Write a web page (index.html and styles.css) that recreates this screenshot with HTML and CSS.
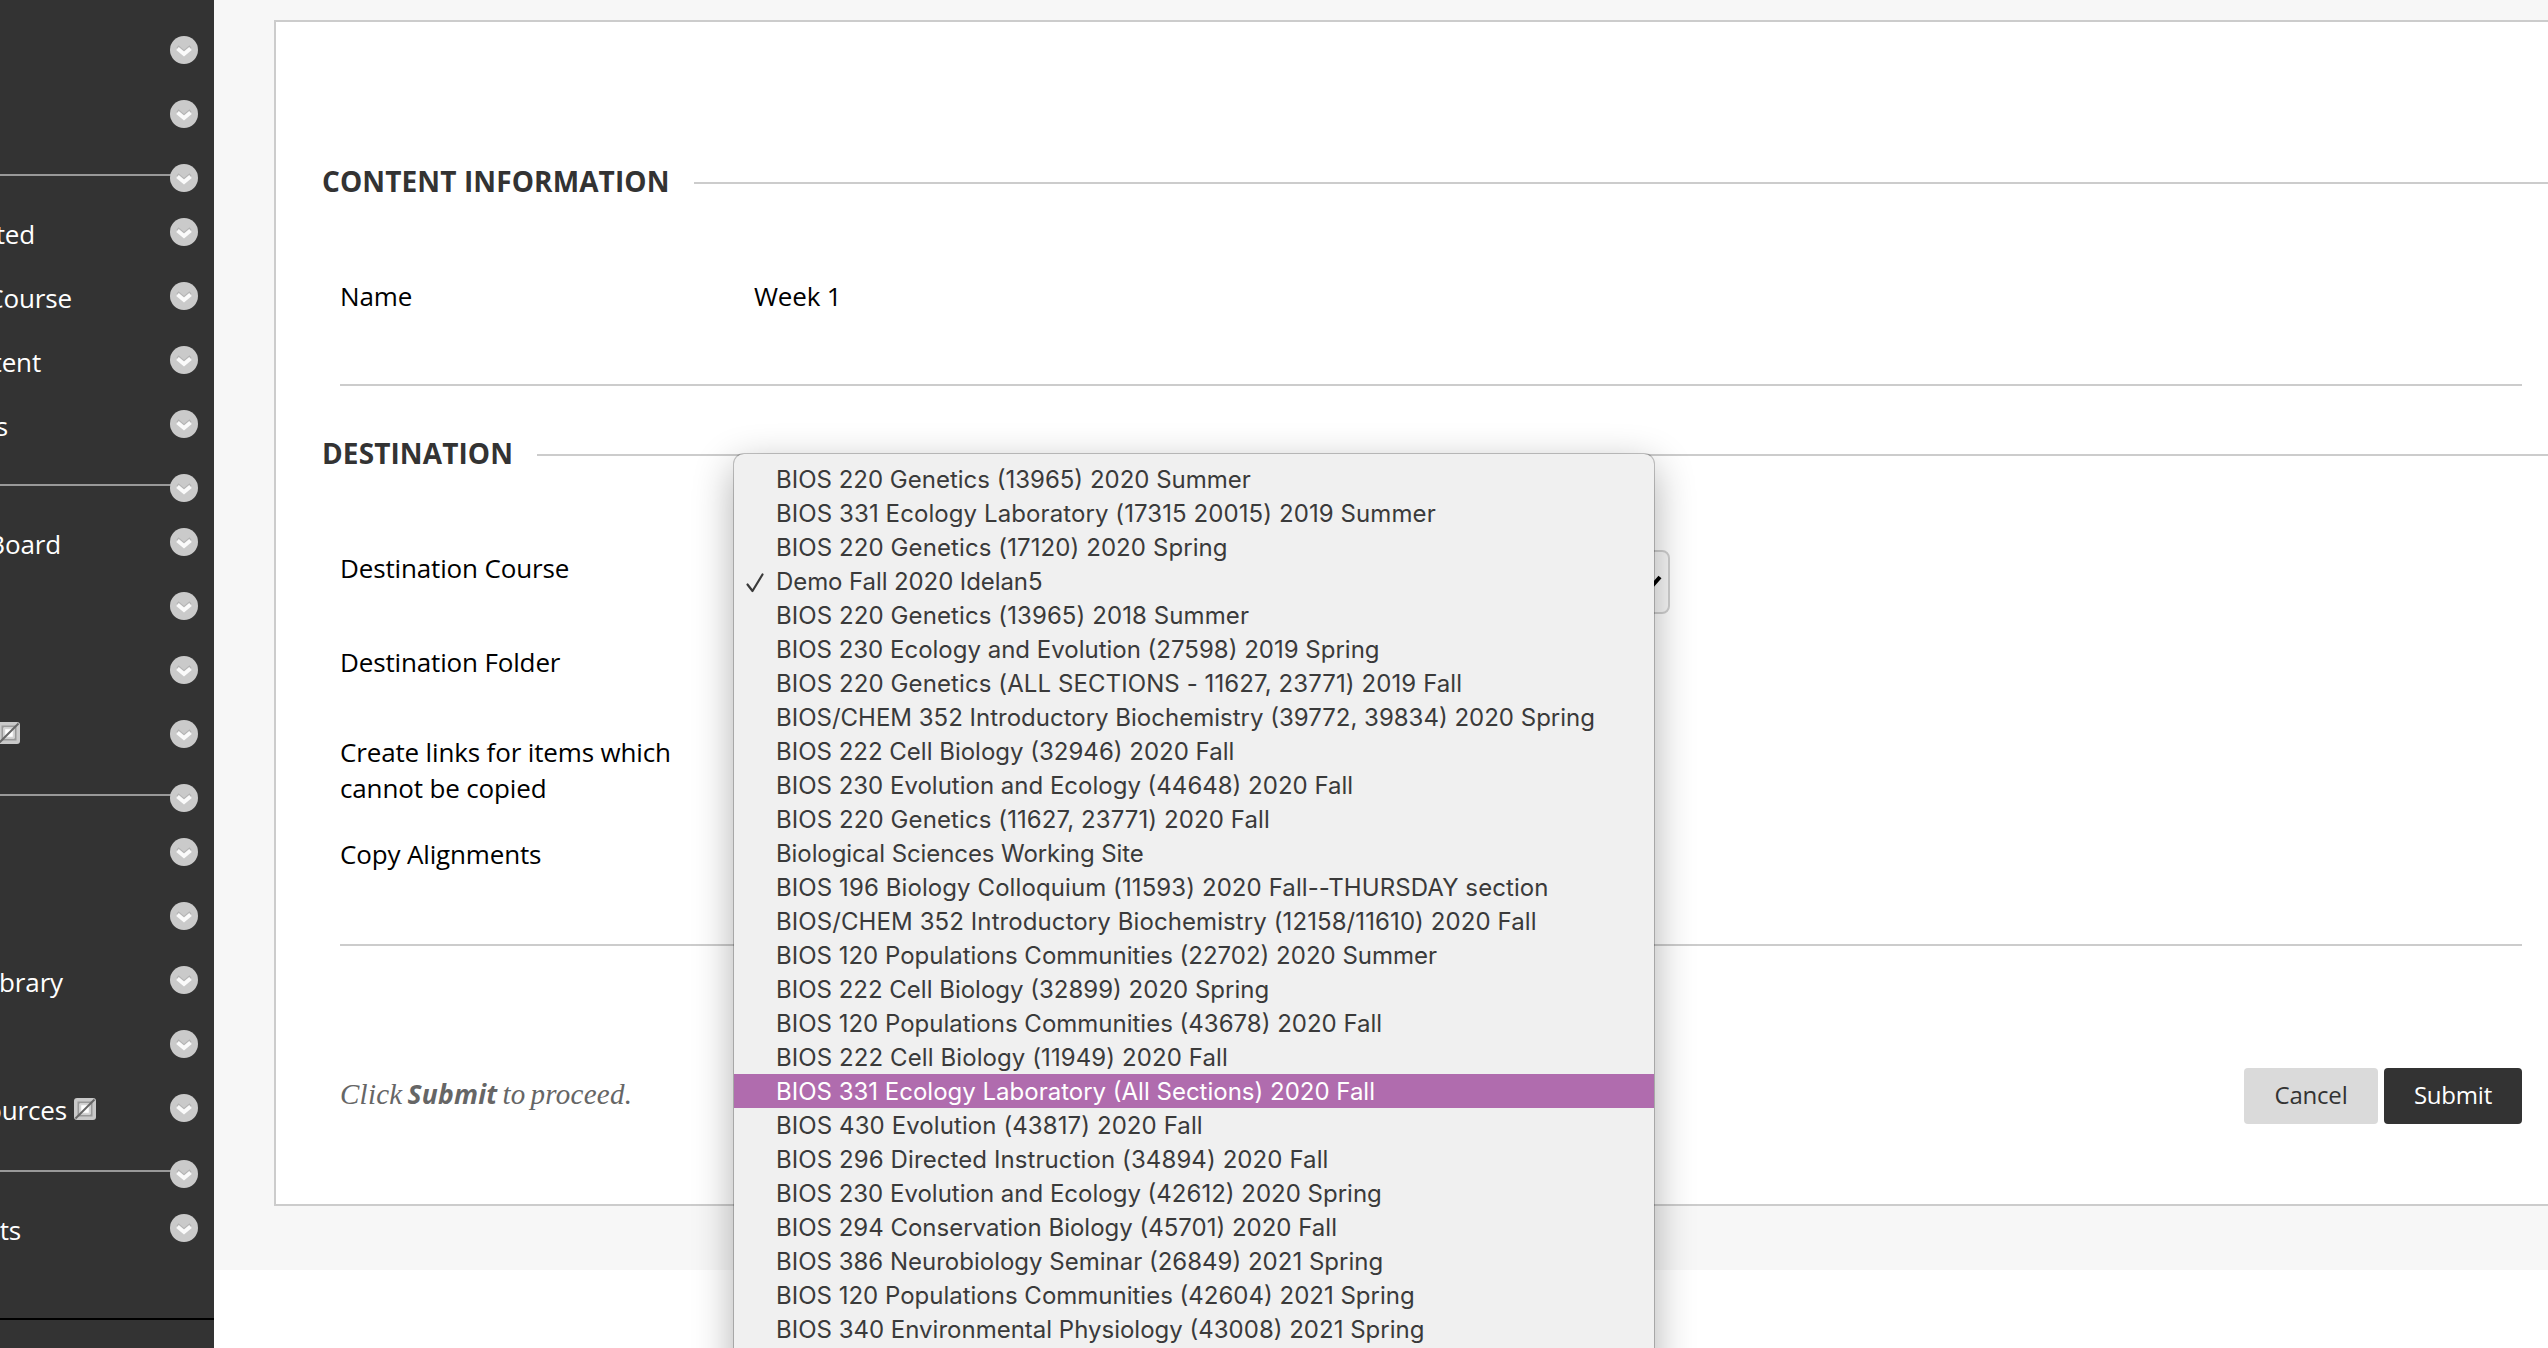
FILE: index.html
```html
<!DOCTYPE html>
<html lang="en">
<head>
<meta charset="utf-8">
<title>Copy Content</title>
<link rel="stylesheet" href="styles.css">
</head>
<body>
<svg class="defs" aria-hidden="true">
  <symbol id="chev" viewBox="0 0 28 28">
    <circle cx="14" cy="14" r="14" fill="#cacaca"/>
    <path d="M7.500 10.500L14 16l6.500-5.500" fill="none" stroke="#b4b4b4" stroke-width="3"/>
    <path d="M7.500 12.500L14 18l6.500-5.500" fill="none" stroke="#fbfbfb" stroke-width="4"/>
  </symbol>
  <symbol id="hidden" viewBox="0 0 22 22">
    <rect width="22" height="22" rx="3" fill="#c9c9c9"/>
    <rect x="4.500" y="4.500" width="13" height="13" fill="#fff" stroke="#999" stroke-width="2"/>
    <rect x="6.500" y="6.500" width="9" height="9" fill="none" stroke="#d5d5d5" stroke-width="1.500"/>
    <path d="M1.500 20.500L20.500 1.500" stroke="#666" stroke-width="2"/>
  </symbol>
</svg>
<div class="page">
  <nav class="sidebar">
    <div class="item"><svg class="chev"><use href="#chev"/></svg></div>
    <div class="item"><svg class="chev"><use href="#chev"/></svg></div>
    <div class="divider"><svg class="chev"><use href="#chev"/></svg></div>
    <div class="item"><span class="label w-started">ted</span><svg class="chev"><use href="#chev"/></svg></div>
    <div class="item"><span class="label w-course">Course</span><svg class="chev"><use href="#chev"/></svg></div>
    <div class="item"><span class="label w-content">tent</span><svg class="chev"><use href="#chev"/></svg></div>
    <div class="item"><span class="label w-s">s</span><svg class="chev"><use href="#chev"/></svg></div>
    <div class="divider"><svg class="chev"><use href="#chev"/></svg></div>
    <div class="item"><span class="label w-board">Board</span><svg class="chev"><use href="#chev"/></svg></div>
    <div class="item"><svg class="chev"><use href="#chev"/></svg></div>
    <div class="item"><svg class="chev"><use href="#chev"/></svg></div>
    <div class="item"><span class="label w-icon"><svg class="hid"><use href="#hidden"/></svg></span><svg class="chev"><use href="#chev"/></svg></div>
    <div class="divider"><svg class="chev"><use href="#chev"/></svg></div>
    <div class="item"><svg class="chev"><use href="#chev"/></svg></div>
    <div class="item"><svg class="chev"><use href="#chev"/></svg></div>
    <div class="item"><span class="label w-library">ibrary</span><svg class="chev"><use href="#chev"/></svg></div>
    <div class="item"><svg class="chev"><use href="#chev"/></svg></div>
    <div class="item tall"><span class="label w-resources">ources<svg class="hid"><use href="#hidden"/></svg></span><svg class="chev"><use href="#chev"/></svg></div>
    <div class="divider"><svg class="chev"><use href="#chev"/></svg></div>
    <div class="item"><span class="label w-ts">ts</span><svg class="chev"><use href="#chev"/></svg></div>
    <div class="nav-end"></div>
  </nav>
  <main class="main">
    <div class="card">
      <h2 class="heading">Content Information</h2>
      <section class="fields fields-info">
        <div class="field"><span class="name">Name</span><span>Week 1</span></div>
      </section>
      <h2 class="heading heading-dest">Destination</h2>
      <section class="fields fields-dest">
        <div class="field field-course"><span class="name">Destination Course</span>
          <span class="select"><svg viewBox="0 0 20 14"><path d="M2 2l8 9 8-9" fill="none" stroke="#000" stroke-width="4"/></svg></span>
        </div>
        <div class="field field-folder"><span class="name">Destination Folder</span></div>
        <div class="field field-links"><span class="name">Create links for items which cannot be copied</span></div>
        <div class="field"><span class="name">Copy Alignments</span></div>
      </section>
      <div class="actions">
        <p class="hint">Click <strong>Submit</strong> to proceed.</p>
        <button class="btn cancel">Cancel</button>
        <button class="btn submit">Submit</button>
      </div>
    </div>
  </main>
</div>
<ul class="menu">
  <li>BIOS 220 Genetics (13965) 2020 Summer</li>
  <li class="wide">BIOS 331 Ecology Laboratory (17315 20015) 2019 Summer</li>
  <li class="wide">BIOS 220 Genetics (17120) 2020 Spring</li>
  <li class="narrow"><svg class="check" viewBox="0 0 18 20"><path d="M1.500 11.500L6.500 18 16.500 1.500" fill="none" stroke="#3a3a3a" stroke-width="2.200" stroke-linecap="round" stroke-linejoin="round"/></svg>Demo Fall 2020 Idelan5</li>
  <li class="wide">BIOS 220 Genetics (13965) 2018 Summer</li>
  <li>BIOS 230 Ecology and Evolution (27598) 2019 Spring</li>
  <li class="wide">BIOS 220 Genetics (ALL SECTIONS - 11627, 23771) 2019 Fall</li>
  <li>BIOS/CHEM 352 Introductory Biochemistry (39772, 39834) 2020 Spring</li>
  <li>BIOS 222 Cell Biology (32946) 2020 Fall</li>
  <li>BIOS 230 Evolution and Ecology (44648) 2020 Fall</li>
  <li class="wide">BIOS 220 Genetics (11627, 23771) 2020 Fall</li>
  <li class="narrow">Biological Sciences Working Site</li>
  <li class="wide">BIOS 196 Biology Colloquium (11593) 2020 Fall--THURSDAY section</li>
  <li class="wide">BIOS/CHEM 352 Introductory Biochemistry (12158/11610) 2020 Fall</li>
  <li>BIOS 120 Populations Communities (22702) 2020 Summer</li>
  <li>BIOS 222 Cell Biology (32899) 2020 Spring</li>
  <li>BIOS 120 Populations Communities (43678) 2020 Fall</li>
  <li class="wide">BIOS 222 Cell Biology (11949) 2020 Fall</li>
  <li class="active">BIOS 331 Ecology Laboratory (All Sections) 2020 Fall</li>
  <li class="wide">BIOS 430 Evolution (43817) 2020 Fall</li>
  <li class="wide">BIOS 296 Directed Instruction (34894) 2020 Fall</li>
  <li>BIOS 230 Evolution and Ecology (42612) 2020 Spring</li>
  <li>BIOS 294 Conservation Biology (45701) 2020 Fall</li>
  <li>BIOS 386 Neurobiology Seminar (26849) 2021 Spring</li>
  <li>BIOS 120 Populations Communities (42604) 2021 Spring</li>
  <li>BIOS 340 Environmental Physiology (43008) 2021 Spring</li>
</ul>
</body>
</html>
```
FILE: styles.css
```css
* { box-sizing: border-box; }
body {
  margin: 0;
  height: 1348px;
  position: relative;
  overflow: hidden;
  background: #fff;
  color: #000;
  font: 26px/36px "Open Sans", sans-serif;
}
.defs { position: absolute; width: 0; height: 0; }
.page { display: flex; height: 1348px; }

/* course menu */
.sidebar {
  width: 214px;
  flex: none;
  display: flex;
  flex-direction: column;
  padding-top: 18px;
  background: #333;
  color: #fff;
  letter-spacing: -.15px;
  overflow: hidden;
}
.item, .divider {
  flex: none;
  display: flex;
  align-items: flex-start;
  height: 64px;
  padding-right: 16px;
}
.item.tall { height: 66px; }
.divider { height: 54px; }
.divider::before {
  content: "";
  flex: 1;
  height: 2px;
  margin: 28px -2px 0 0;
  background: #999;
}
.chev { flex: none; width: 28px; height: 28px; margin: 18px 0 0 auto; }
.label {
  display: flex;
  justify-content: flex-end;
  line-height: 68px;
}
.hid { flex: none; width: 22px; height: 22px; margin: 22px 0 0 7px; }
.w-started { width: 35px; }
.w-course { width: 72px; }
.w-content { width: 41px; }
.w-s { width: 8px; }
.w-board { width: 61px; }
.w-icon { width: 20px; }
.w-icon .hid { margin-top: 20px; }
.w-library { width: 63px; }
.w-resources { width: 96px; }
.w-ts { width: 21px; }
.nav-end { margin-top: 58px; height: 30px; border-top: 2px solid #000; }

/* form */
.main {
  flex: 1;
  height: 1270px;
  padding: 20px 0 0 60px;
  background: #f7f7f7;
}
.card {
  height: 1186px;
  padding: 139px 0 0 46px;
  background: #fff;
  border: 2px solid #ccc;
  border-right: 0;
}
.heading {
  display: flex;
  align-items: center;
  margin: 0;
  color: #333;
  font-size: 28px;
  line-height: 40px;
  letter-spacing: .11px;
  text-transform: uppercase;
}
.heading::after {
  content: "";
  flex: 1;
  height: 2px;
  margin: 4px 0 0 24px;
  background: #ccc;
}
.heading-dest { margin-top: 47px; }
.fields {
  margin: 0 26px 0 18px;
  border-bottom: 2px solid #ccc;
  letter-spacing: -.15px;
}
.fields-info { padding: 77px 0 70px; }
.fields-dest { padding: 77px 0 72px; }
.field { display: flex; }
.name { width: 340px; margin-right: 74px; }
.field-course, .field-folder { height: 36px; }
.field-course { margin-bottom: 58px; }
.field-folder { margin-bottom: 54px; }
.field-links { margin-bottom: 30px; }
.select {
  display: flex;
  justify-content: flex-end;
  align-items: center;
  width: 916px;
  height: 64px;
  padding-right: 6px;
  border: 2px solid #d0d0d0;
  border-radius: 8px;
  background: #f8f8f8;
}
.select svg { width: 20px; height: 14px; }
.actions {
  display: flex;
  gap: 6px;
  padding: 122px 26px 0 18px;
}
.hint {
  margin: 6px auto 0 0;
  color: #666;
  font: italic 29px/40px "Liberation Serif", serif;
  letter-spacing: .25px;
  word-spacing: -2.5px;
}
.hint strong {
  font: italic bold 26.5px/36px "Open Sans", sans-serif;
}
.btn {
  width: 134px;
  height: 56px;
  padding: 0 0 2px;
  border: 0;
  border-radius: 4px;
  background: #dadada;
  color: #333;
  font: 24px/54px "Open Sans", sans-serif;
  letter-spacing: -.2px;
}
.btn.submit { width: 138px; background: #333; color: #fff; }

/* open course list */
.menu {
  position: absolute;
  left: 734px;
  top: 454px;
  width: 920px;
  height: 960px;
  margin: 0;
  padding: 8px 0;
  list-style: none;
  border-radius: 10px 10px 0 0;
  background: #f0f0f0;
  box-shadow: 0 0 0 1px rgba(0, 0, 0, .22), 0 12px 40px rgba(0, 0, 0, .32);
  color: #3a3a3a;
  font: 24px/33px Inter, sans-serif;
}
.menu li {
  display: flex;
  align-items: center;
  height: 34px;
  padding: 1px 0 0 42px;
  white-space: pre;
}
.menu .wide { letter-spacing: .09px; }
.menu .narrow { letter-spacing: -.09px; }
.menu .active { background: #b06cae; color: #fff; }
.check { width: 18px; height: 20px; margin: 2px 12px 0 -30px; }
```
